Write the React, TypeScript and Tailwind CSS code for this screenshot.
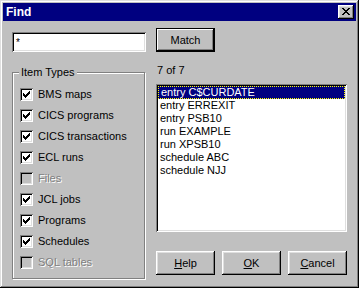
import React from 'react'

const types = [
  { label: 'BMS maps', checked: true },
  { label: 'CICS programs', checked: true },
  { label: 'CICS transactions', checked: true },
  { label: 'ECL runs', checked: true },
  { label: 'Files', checked: false, disabled: true },
  { label: 'JCL jobs', checked: true },
  { label: 'Programs', checked: true },
  { label: 'Schedules', checked: true },
  { label: 'SQL tables', checked: false, disabled: true },
]

const items = [
  'entry C$CURDATE',
  'entry ERREXIT',
  'entry PSB10',
  'run EXAMPLE',
  'run XPSB10',
  'schedule ABC',
  'schedule NJJ',
]

const raised = 'shadow-[inset_-1px_-1px_0_#000,inset_1px_1px_0_#fff,inset_-2px_-2px_0_#808080,inset_2px_2px_0_#dfdfdf]'
const sunken = 'shadow-[inset_1px_1px_0_#808080,inset_-1px_-1px_0_#fff,inset_2px_2px_0_#000,inset_-2px_-2px_0_#dfdfdf]'

const CheckBox = ({ label, checked, disabled }: { label: string, checked: boolean, disabled?: boolean }) => {
  return (
    <div className="flex items-center gap-[5px] h-[13px]">
      <div className={`relative w-[13px] h-[13px] shrink-0 ${disabled ? 'bg-[#c0c0c0]' : 'bg-white'} ${sunken}`}>
        {checked && (
          <svg className="absolute left-[3px] top-[3px]" width="7" height="7" viewBox="0 0 7 7" shapeRendering="crispEdges">
            <path d="M0 2h1v1H0zM0 3h2v1H0zM0 4h3v1H0zM1 5h3v1H1zM2 6h1v1H2zM3 4h2v1H3zM4 3h2v1H4zM5 2h1v1H5zM6 0h1v3H6zM5 1h1v1H5zM4 2h1v1H4zM3 3h1v1H3zM6 2h1v1H6z" fill="#000" />
          </svg>
        )}
      </div>
      <span className={disabled ? 'text-[#808080] [text-shadow:1px_1px_0_#fff]' : 'text-black'}>{label}</span>
    </div>
  )
}

const Button = ({ children }: { children: React.ReactNode }) => (
  <button className={`w-[59px] h-[24px] bg-[#c0c0c0] flex items-center justify-center ${raised}`}>{children}</button>
)

const App = () => {
  return (
    <div className="w-[359px] h-[288px] bg-[#c0c0c0] p-[3px] flex flex-col font-['Liberation_Sans',Arial,sans-serif] text-[11px] leading-[13px] text-black shadow-[inset_-1px_-1px_0_#000,inset_1px_1px_0_#dfdfdf,inset_-2px_-2px_0_#808080,inset_2px_2px_0_#fff]">
      <div className="h-[18px] bg-[#000080] flex items-center justify-between pl-[3px] pr-[2px]">
        <span className="text-white font-bold text-[12px]">Find</span>
        <div className={`w-[16px] h-[14px] bg-[#c0c0c0] flex items-center justify-center ${raised}`}>
          <svg width="8" height="7" viewBox="0 0 8 7" shapeRendering="crispEdges" className="mb-[1px]">
            <path d="M0 0h2v1H0zM6 0h2v1H6zM1 1h2v1H1zM5 1h2v1H5zM2 2h4v1H2zM3 3h2v1H3zM2 4h4v1H2zM1 5h2v1H1zM5 5h2v1H5zM0 6h2v1H0zM6 6h2v1H6z" fill="#000" />
          </svg>
        </div>
      </div>
      <div className="flex">
        <div className="ml-[9px] w-[134px] flex flex-col">
          <div className={`mt-[11px] h-[20px] bg-white pl-[4px] pt-[4px] ${sunken}`}>
            <span className="text-[10px]">*</span>
          </div>
          <div className="relative mt-[20px] w-[133px] h-[207px] border border-[#808080] shadow-[1px_1px_0_#fff,inset_1px_1px_0_#fff] pt-[15px] pl-[7px] flex flex-col gap-[8px]">
            <span className="absolute left-[6px] top-[-7px] bg-[#c0c0c0] px-[2px]">Item Types</span>
            {types.map(t => (
              <CheckBox key={t.label} label={t.label} checked={t.checked} disabled={t.disabled} />
            ))}
          </div>
        </div>
        <div className="ml-[10px] w-[191px] flex flex-col">
          <button className="mt-[7px] w-[59px] h-[24px] bg-[#c0c0c0] border border-black flex items-center justify-center shadow-[inset_-1px_-1px_0_#000,inset_1px_1px_0_#fff,inset_-2px_-2px_0_#808080]">Match</button>
          <div className="mt-[12px] pl-[1px]">7 of 7</div>
          <div className={`mt-[7px] h-[148px] bg-white p-[2px] ${sunken}`}>
            {items.map((it, i) => (
              <div
                key={it}
                className={`h-[13px] pl-[2px] whitespace-nowrap ${i === 0 ? 'bg-[#000080] text-white border border-dotted border-[#ffff00] leading-[11px] pl-[1px]' : ''}`}
              >
                {it}
              </div>
            ))}
          </div>
          <div className="mt-[19px] flex gap-[7px]">
            <Button><span className="underline">H</span>elp</Button>
            <Button><span className="underline">O</span>K</Button>
            <Button><span className="underline">C</span>ancel</Button>
          </div>
        </div>
      </div>
    </div>
  )
}

export default App
